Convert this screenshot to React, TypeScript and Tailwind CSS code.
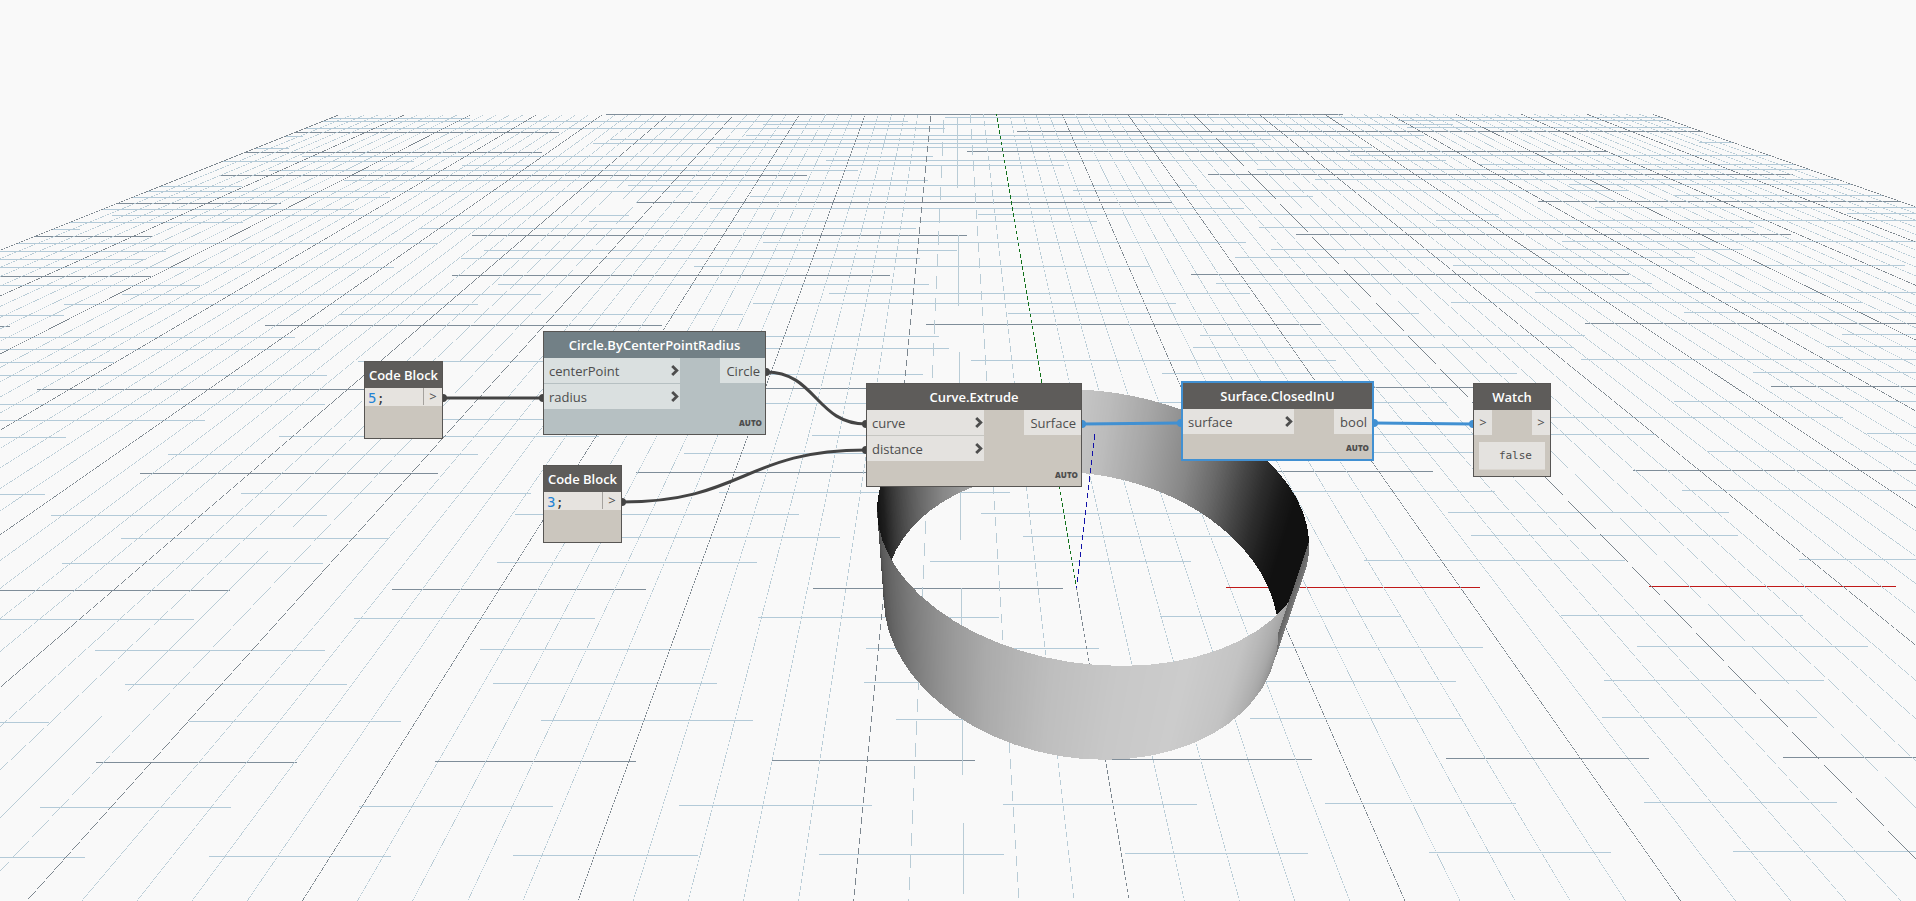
import type { ReactNode } from "react";

/* Camera for the 3D preview; one scene unit is one major grid cell. */
const VX = 955.1;
const HORIZON = -131.489;

function project(x: number, y: number, z = 0): [number, number] {
  const w = 0.00138954 + 0.00026759 * y + 8.875e-7 * x - 0.0001919 * z;
  return [
    VX + (0.1687 + 0.267 * x - 0.0006 * z) / w,
    HORIZON + (1 - 0.3286 * z) / w,
  ];
}

type Point3 = [number, number, number];

/* Lines are thinner than a pixel and drawn unsmoothed, so they break into dashes. */
const LINE = 0.6;

function segment(a: Point3, b: Point3) {
  const [x1, y1] = project(...a);
  const [x2, y2] = project(...b);
  const length = Math.hypot(x2 - x1, y2 - y1);
  const nx = (-(y2 - y1) / length) * (LINE / 2);
  const ny = ((x2 - x1) / length) * (LINE / 2);
  const f = (n: number) => n.toFixed(3);
  return (
    `M${f(x1 + nx)} ${f(y1 + ny)}L${f(x2 + nx)} ${f(y2 + ny)}` +
    `L${f(x2 - nx)} ${f(y2 - ny)}L${f(x1 - nx)} ${f(y1 - ny)}Z`
  );
}

const NEAR = -1.8;
const FAR = 10;
let minorRows = "";
let majorRows = "";
let minorColumns = "";
let majorColumns = "";

for (let i = -9; i <= 50; i++) {
  const y = i / 5;
  if (i === 0) majorRows += segment([-10, 0, 0], [0, 0, 0]);
  else if (i % 5 === 0) majorRows += segment([-10, y, 0], [10, y, 0]);
  else minorRows += segment([-10, y, 0], [10, y, 0]);
}
for (let i = -50; i <= 50; i++) {
  const x = i / 5;
  if (i === 0) majorColumns += segment([0, NEAR, 0], [0, 0, 0]);
  else if (i % 5 === 0) majorColumns += segment([x, NEAR, 0], [x, FAR, 0]);
  else minorColumns += segment([x, NEAR, 0], [x, FAR, 0]);
}

/* Grey level of the surface by angle in degrees. */
const INSIDE = [
  [-18, 17], [0, 17], [8, 26], [17, 46], [25, 70], [35, 104], [45, 133], [60, 164], [75, 188],
  [90, 203], [105, 190], [120, 166], [135, 134], [150, 93], [165, 50], [172, 30], [184, 17],
];
const OUTSIDE = [
  [184, 60], [195, 88], [210, 112], [225, 143], [240, 171], [255, 190], [270, 200], [285, 204],
  [300, 195], [315, 168], [330, 130], [342, 100],
];

function shade(table: number[][], angle: number) {
  for (let i = 1; i < table.length; i++) {
    const [a0, g0] = table[i - 1];
    const [a1, g1] = table[i];
    if (angle <= a1) return g0 + ((g1 - g0) * (angle - a0)) / (a1 - a0);
  }
  return table[table.length - 1][1];
}

const HEIGHT = 0.6;
const FACETS = 64;

function rim(angle: number, z: number) {
  const size = 360 / FACETS;
  const k = Math.floor(angle / size + 1e-6);
  const t = angle / size - k;
  const r0 = (k * size * Math.PI) / 180;
  const r1 = ((k + 1) * size * Math.PI) / 180;
  return project(
    Math.cos(r0) * (1 - t) + Math.cos(r1) * t,
    Math.sin(r0) * (1 - t) + Math.sin(r1) * t,
    z,
  );
}

function strips(from: number, to: number, table: number[][]) {
  const step = 0.5;
  const out: { points: string; fill: string }[] = [];
  for (let a = from; a < to - 1e-6; a += step) {
    const corners = [rim(a, 0), rim(a + step, 0), rim(a + step, HEIGHT), rim(a, HEIGHT)];
    const g = Math.round(shade(table, a + step / 2));
    out.push({
      points: corners.map(([x, y]) => `${x.toFixed(2)},${y.toFixed(2)}`).join(" "),
      fill: `rgb(${g},${g},${g})`,
    });
  }
  return out;
}

/* Inner faces first, then the outer faces over them. */
const cylinder = [...strips(-18, 184, INSIDE), ...strips(184, 342, OUTSIDE)];

function Scene() {
  return (
    <svg className="absolute inset-0 size-full" aria-hidden="true">
      <g shapeRendering="crispEdges">
        <path d={minorRows} fill="#b3cad8" />
        <path d={majorRows} fill="#7f8d99" />
        <path d={segment([0, 0, 0], [5, 0, 0])} fill="#c01818" />
        <path d={minorColumns} fill="#b9ccd6" />
        <path d={majorColumns} fill="#7c868e" />
        <path d={segment([0, 0, 0], [0, 10, 0])} fill="#10701a" />
        {cylinder.map((s, i) => (
          <polygon key={i} points={s.points} fill={s.fill} />
        ))}
        <path d={segment([0, 0, 0], [0, 0, 0.985])} fill="#1010a8" />
      </g>
    </svg>
  );
}

function Wires() {
  return (
    <svg className="absolute inset-0 size-full" aria-hidden="true">
      <g fill="none" stroke="#444444" strokeWidth="3">
        <path d="M443 398H543" />
        <path d="M766 372C816 372 816 424 866 424" />
        <path d="M622 502C744 502 744 450 866 450" />
      </g>
      <g fill="#444444">
        <circle cx="443" cy="398" r="4" />
        <circle cx="543" cy="398" r="4" />
        <circle cx="766" cy="372" r="4" />
        <circle cx="866" cy="424" r="4" />
        <circle cx="622" cy="502" r="4" />
        <circle cx="866" cy="450" r="4" />
      </g>
      <g fill="none" stroke="#4190d2" strokeWidth="3">
        <path d="M1082 424L1181 423" />
        <path d="M1374 423L1473 424" />
      </g>
      <g fill="#4190d2">
        <circle cx="1082" cy="424" r="4" />
        <circle cx="1181" cy="423" r="4" />
        <circle cx="1374" cy="423" r="4" />
        <circle cx="1473" cy="424" r="4" />
      </g>
    </svg>
  );
}

function Chevron() {
  return (
    <svg viewBox="0 0 8 11" className="h-[11px] w-2" fill="none" stroke="#4d4d4d" strokeWidth="2.8">
      <path d="M1.2 1L5.8 5.5L1.2 10" />
    </svg>
  );
}

function Input({ name, frozen }: { name: string; frozen?: boolean }) {
  return (
    <li
      className={`flex h-[25px] items-center justify-between pt-0.5 pr-px pl-[5px] ${
        frozen ? "bg-[#dae0e0]" : "bg-[#e4e2df]"
      }`}
    >
      {name}
      <button type="button" aria-label={`${name} options`} className="pb-0.5">
        <Chevron />
      </button>
    </li>
  );
}

type NodeProps = {
  title: string;
  place: string;
  inputs: string[];
  output: string;
  frozen?: boolean;
  selected?: boolean;
};

function FunctionNode({ title, place, inputs, output, frozen, selected }: NodeProps) {
  return (
    <section
      className={`absolute flex flex-col ${place} ${
        selected ? "border-2 border-[#4190d2]" : "border border-[#575553]"
      } ${frozen ? "bg-[#b6c0c2]" : "bg-[#cbc6be]"}`}
    >
      <Title frozen={frozen}>{title}</Title>
      <div className="flex items-start justify-between text-[13px] leading-[25px] text-[#4d4d4d]">
        <ul className={`flex grow flex-col gap-px ${frozen ? "bg-[#b6c0c2]" : "bg-[#c6c6c2]"}`}>
          {inputs.map((name) => (
            <Input key={name} name={name} frozen={frozen} />
          ))}
        </ul>
        <div
          className={`ml-10 h-[25px] pr-[5px] pl-1.5 leading-[27px] ${
            frozen ? "bg-[#dae0e0]" : "bg-[#e4e2df]"
          }`}
        >
          {output}
        </div>
      </div>
      <div className="mt-auto pr-[3px] text-right text-[8px] leading-[22px] font-extrabold text-[#4d4d4d]">
        AUTO
      </div>
    </section>
  );
}

function Title({ children, frozen }: { children: ReactNode; frozen?: boolean }) {
  return (
    <h2
      className={`h-[26px] text-center text-[13px] leading-[27px] font-semibold whitespace-nowrap text-white ${
        frozen ? "bg-[#728086]" : "bg-[#5e5c5a]"
      }`}
    >
      {children}
    </h2>
  );
}

function CodeBlock({ value, place }: { value: string; place: string }) {
  return (
    <section
      className={`absolute flex h-[78px] w-[79px] flex-col border border-[#575553] bg-[#cbc6be] ${place}`}
    >
      <Title>Code Block</Title>
      <div className="flex h-[18px] items-start bg-[#e6e3df] leading-[20px] text-[#4d4d4d]">
        <code className="grow pl-[3px] font-['DejaVu_Sans_Mono',monospace] text-[14px] text-[#3a3a3a]">
          <span className="text-[#2382d4]">{value}</span>;
        </code>
        <span className="w-[19px] border-l border-[#a5a29e] text-center text-[13px] leading-[17px]">
          &gt;
        </span>
      </div>
    </section>
  );
}

function WatchNode() {
  return (
    <section className="absolute top-[383px] left-[1473px] flex h-[94px] w-[78px] flex-col border border-[#575553] bg-[#cbc6be]">
      <Title>Watch</Title>
      <div className="flex justify-between text-center text-[13px] leading-[25px] text-[#4d4d4d]">
        <span className="w-[18px] bg-[#e4e2df]">&gt;</span>
        <span className="w-[18px] bg-[#e4e2df]">&gt;</span>
      </div>
      <output className="mx-[5px] mt-[7px] h-7 border-b border-[#dad6d0] bg-[#e4e2df] pr-[13px] text-right font-['DejaVu_Sans_Mono',monospace] text-[11px] leading-[27px] text-[#4d4d4d]">
        false
      </output>
    </section>
  );
}

export default function App() {
  return (
    <main className="relative h-screen overflow-hidden bg-[#f9f9f9] font-['Open_Sans','Noto_Sans',sans-serif]">
      <Scene />
      <Wires />
      <CodeBlock value="5" place="left-[364px] top-[361px]" />
      <CodeBlock value="3" place="left-[543px] top-[465px]" />
      <FunctionNode
        title="Circle.ByCenterPointRadius"
        place="left-[543px] top-[331px] h-[104px] w-[223px]"
        inputs={["centerPoint", "radius"]}
        output="Circle"
        frozen
      />
      <FunctionNode
        title="Curve.Extrude"
        place="left-[866px] top-[383px] h-[104px] w-[216px]"
        inputs={["curve", "distance"]}
        output="Surface"
      />
      <FunctionNode
        title="Surface.ClosedInU"
        place="left-[1181px] top-[381px] h-[80px] w-[193px]"
        inputs={["surface"]}
        output="bool"
        selected
      />
      <WatchNode />
    </main>
  );
}
